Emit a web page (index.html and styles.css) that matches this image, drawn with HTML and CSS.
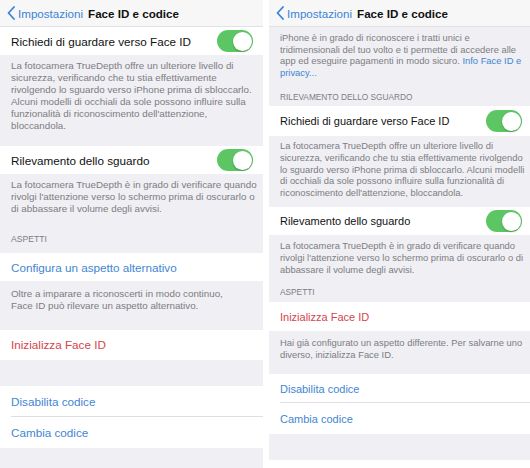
FILE: index.html
```html
<!DOCTYPE html>
<html lang="it">
    <head>
        <meta charset="UTF-8" />
        <meta name="viewport" content="width=device-width, initial-scale=1.0" />
        <title>Face ID e codice</title>
        <link rel="stylesheet" href="styles.css">
    </head>
    <body>
        <div class="screens">
            <div class="phone">
                <div class="nav">
                    <span class="back">
                        <svg class="chev" width="8" height="14" viewBox="0 0 8 14">
                            <path d="M7 1 L1.5 7 L7 13" fill="none" stroke="#3a84d6" stroke-width="1.8" stroke-linecap="round" stroke-linejoin="round" />
                        </svg>
                        Impostazioni
                    </span>
                    <span class="title">Face ID e codice</span>
                </div>

                <div class="row r1">
                    <span class="label">Richiedi di guardare verso Face ID</span>
                    <span class="switch"></span>
                </div>
                <div class="foot f1">
                    La fotocamera TrueDepth offre un ulteriore livello di<br>
                    sicurezza, verificando che tu stia effettivamente<br>
                    rivolgendo lo sguardo verso iPhone prima di sbloccarlo.<br>
                    Alcuni modelli di occhiali da sole possono influire sulla<br>
                    funzionalità di riconoscimento dell'attenzione,<br>
                    bloccandola.
                </div>

                <div class="row r2">
                    <span class="label">Rilevamento dello sguardo</span>
                    <span class="switch"></span>
                </div>
                <div class="foot f2">
                    La fotocamera TrueDepth è in grado di verificare quando<br>
                    rivolgi l'attenzione verso lo schermo prima di oscurarlo o<br>
                    di abbassare il volume degli avvisi.
                </div>

                <div class="section s1">ASPETTI</div>
                <div class="row r3">
                    <span class="label link">Configura un aspetto alternativo</span>
                </div>
                <div class="foot f3">
                    Oltre a imparare a riconoscerti in modo continuo,<br>
                    Face ID può rilevare un aspetto alternativo.
                </div>

                <div class="row r4">
                    <span class="label danger">Inizializza Face ID</span>
                </div>
                <div class="spacer"></div>

                <div class="row r5 sep">
                    <span class="label link">Disabilita codice</span>
                </div>
                <div class="row r6">
                    <span class="label link">Cambia codice</span>
                </div>
            </div>

            <div class="phone small">
                <div class="nav">
                    <span class="back">
                        <svg class="chev" width="8" height="14" viewBox="0 0 8 14">
                            <path d="M7 1 L1.5 7 L7 13" fill="none" stroke="#3a84d6" stroke-width="1.8" stroke-linecap="round" stroke-linejoin="round" />
                        </svg>
                        Impostazioni
                    </span>
                    <span class="title">Face ID e codice</span>
                </div>

                <div class="foot f0">
                    iPhone è in grado di riconoscere i tratti unici e<br>
                    tridimensionali del tuo volto e ti permette di accedere alle<br>
                    app ed eseguire pagamenti in modo sicuro. <span class="flink">Info Face ID e</span><br>
                    <span class="flink">privacy...</span>
                </div>

                <div class="section s0">RILEVAMENTO DELLO SGUARDO</div>
                <div class="row r1">
                    <span class="label">Richiedi di guardare verso Face ID</span>
                    <span class="switch"></span>
                </div>
                <div class="foot f1">
                    La fotocamera TrueDepth offre un ulteriore livello di<br>
                    sicurezza, verificando che tu stia effettivamente rivolgendo<br>
                    lo sguardo verso iPhone prima di sbloccarlo. Alcuni modelli<br>
                    di occhiali da sole possono influire sulla funzionalità di<br>
                    riconoscimento dell'attenzione, bloccandola.
                </div>

                <div class="row r2">
                    <span class="label">Rilevamento dello sguardo</span>
                    <span class="switch"></span>
                </div>
                <div class="foot f2">
                    La fotocamera TrueDepth è in grado di verificare quando<br>
                    rivolgi l'attenzione verso lo schermo prima di oscurarlo o di<br>
                    abbassare il volume degli avvisi.
                </div>

                <div class="section s1">ASPETTI</div>
                <div class="row r3">
                    <span class="label danger">Inizializza Face ID</span>
                </div>
                <div class="foot f3">
                    Hai già configurato un aspetto differente. Per salvarne uno<br>
                    diverso, inizializza Face ID.
                </div>

                <div class="row r4 sep">
                    <span class="label link">Disabilita codice</span>
                </div>
                <div class="row r5">
                    <span class="label link">Cambia codice</span>
                </div>
            </div>
        </div>
    </body>
</html>
```

FILE: styles.css
```css
body {
    margin: 0;
    background: white;
    font-family: "Liberation Sans", Arial, sans-serif;
}

.screens {
    display: flex;
    gap: 6px;
    height: 468px;
}

.phone {
    width: 263px;
    height: 468px;
    background: #efeff4;
    display: flex;
    flex-direction: column;
    overflow: hidden;
}

.phone.small {
    width: 261px;
    height: 460px;
}

/* nav bar */
.nav {
    height: 27px;
    flex-shrink: 0;
    background: #f7f7f8;
    border-bottom: 1px solid #e2e2e6;
    box-sizing: border-box;
    display: flex;
    align-items: center;
    font-size: 11.6px;
    padding-left: 7px;
}

.back {
    color: #3a84d6;
    display: flex;
    align-items: center;
    gap: 3px;
}

.title {
    font-weight: bold;
    color: #111;
    margin-left: 5px;
}

/* rows */
.row {
    background: white;
    flex-shrink: 0;
    display: flex;
    align-items: center;
    justify-content: space-between;
    padding: 0 10px 0 11px;
    box-sizing: border-box;
    font-size: 11.7px;
    color: #111;
    position: relative;
}

.small .row {
    font-size: 11px;
    padding-right: 8px;
}

.label.link {
    color: #3f86d2;
}
.label.danger {
    color: #d3454c;
}

.row.sep::after {
    content: "";
    position: absolute;
    left: 11px;
    right: 0;
    bottom: 0;
    height: 1px;
    background: #dedee3;
}

.switch {
    width: 36px;
    height: 22px;
    border-radius: 999px;
    background: #5cc664;
    position: relative;
    flex-shrink: 0;
}
.switch::after {
    content: "";
    position: absolute;
    top: 1.5px;
    right: 1.5px;
    width: 19px;
    height: 19px;
    border-radius: 50%;
    background: white;
    box-shadow: 0 1px 2px rgba(0, 0, 0, 0.25);
}

/* footers and section headers */
.foot {
    flex-shrink: 0;
    padding: 5px 11px 0;
    font-size: 9.8px;
    line-height: 11.9px;
    color: #7d7d82;
    white-space: nowrap;
}
.small .foot {
    font-size: 9.4px;
    line-height: 11.6px;
    padding-top: 4px;
}

.flink {
    color: #3f86d2;
}

.section {
    flex-shrink: 0;
    padding: 0 11px;
    font-size: 8.6px;
    line-height: 11px;
    color: #7d7d82;
}
.small .section {
    font-size: 8.3px;
}

.spacer {
    height: 26px;
    flex-shrink: 0;
}

/* left screen */
.r1 { height: 28px; }
.f1 { padding-bottom: 15px; }
.r2 { height: 28px; }
.f2 { padding-bottom: 0; }
.s1 { padding-top: 19px; padding-bottom: 8px; }
.r3 { height: 28px; }
.f3 { padding-top: 7px; padding-bottom: 18px; }
.r4 { height: 30px; }
.r5 { height: 31px; }
.r6 { height: 31px; }

/* right screen */
.small .f0 { padding-top: 5px; }
.small .s0 { padding-top: 14px; padding-bottom: 3px; }
.small .r1 { height: 30px; }
.small .f1 { padding-bottom: 9px; }
.small .r2 { height: 28px; }
.small .f2 { padding-top: 5px; padding-bottom: 0; }
.small .s1 { padding-top: 12px; padding-bottom: 4px; }
.small .r3 { height: 29px; }
.small .f3 { padding-top: 6px; padding-bottom: 14px; }
.small .r4 { height: 29px; }
.small .r5 { height: 31px; }
```
